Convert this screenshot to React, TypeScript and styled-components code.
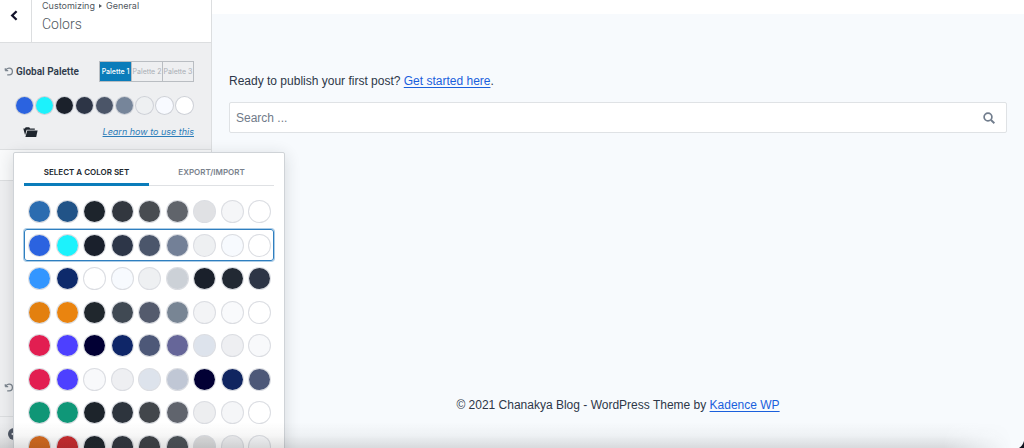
import React from "react";
import styled, { createGlobalStyle } from "styled-components";

const GlobalStyle = createGlobalStyle`
  * { box-sizing: border-box; }
  html, body { margin: 0; height: 100%; overflow: hidden; }
  body { font-family: Inter, "Liberation Sans", sans-serif; color: #2d3748; }
  button, input { font-family: inherit; }
  button { padding: 0; border: 0; background: none; cursor: pointer; }
  h1, h2, p { margin: 0; }
`;

const Page = styled.div`
  position: relative;
  display: grid;
  grid-template-columns: 212px minmax(0, 1fr);
  height: 100vh;
  overflow: hidden;
`;

const Sidebar = styled.aside`
  position: relative;
  z-index: 1;
  display: flex;
  flex-direction: column;
  min-height: 0;
  background: #eeeff1;
  border-right: 1px solid #dcdee0;
`;

const PanelHeader = styled.header`
  display: flex;
  flex: none;
  height: 43px;
  background: #fff;
  border-bottom: 1px solid #dcdee0;
`;

const BackButton = styled.button`
  display: flex;
  justify-content: center;
  align-items: flex-start;
  width: 32px;
  padding: 10px 3px 0 0;
  border-right: 1px solid #dcdee0;
  color: #14142b;
`;

const Heading = styled.div`
  padding-left: 10px;
`;

const Crumb = styled.p`
  display: flex;
  align-items: center;
  gap: 4px;
  font-size: 9px;
  line-height: 12px;
  color: #50575e;
`;

const CrumbMark = styled.span`
  border: 2px solid transparent;
  border-left: 3px solid #50575e;
  border-right: 0;
`;

const PanelTitle = styled.h1`
  font-family: Roboto, sans-serif;
  font-size: 14px;
  line-height: 24px;
  font-weight: 300;
  color: #50575e;
`;

const PaletteControl = styled.section`
  position: relative;
  flex: none;
  height: 106px;
  padding: 18px 17px 0 4px;
`;

const ControlBar = styled.div`
  display: flex;
  align-items: center;
  justify-content: space-between;
  height: 21px;
`;

const ControlTitle = styled.div`
  display: flex;
  align-items: center;
  gap: 2px;
`;

const ControlName = styled.h2`
  font-family: Roboto, sans-serif;
  font-size: 10px;
  line-height: 14px;
  font-weight: 600;
  color: #2f3a4a;
  white-space: nowrap;
`;

const ResetButton = styled.button`
  display: flex;
  color: #7b848e;
`;

const ButtonGroup = styled.div`
  display: grid;
  grid-template-columns: repeat(3, 1fr);
  width: 95px;
  height: 21px;
  border: 1px solid #b9bdc2;
`;

const PaletteButton = styled.button<{ $active?: boolean }>`
  font-size: 7px;
  line-height: 8px;
  font-weight: ${(p) => (p.$active ? 500 : 400)};
  white-space: nowrap;
  color: ${(p) => (p.$active ? "#fff" : "#a9aeb5")};
  background: ${(p) => (p.$active ? "#0a7cba" : "transparent")};
  & + & { border-left: 1px solid #b9bdc2; }
`;

const Swatches = styled.div`
  display: flex;
  justify-content: space-between;
  padding-left: 11px;
  margin-top: 14px;
`;

const Swatch = styled.span<{ $color: string; $size: number }>`
  display: block;
  flex: none;
  width: ${(p) => p.$size}px;
  height: ${(p) => p.$size}px;
  border-radius: 50%;
  border: 1px solid rgba(110, 120, 140, 0.25);
  background: ${(p) => p.$color};
  background-clip: padding-box;
`;

const SwatchButton = styled(Swatch).attrs({ as: "button" })``;

const ControlFooter = styled.div`
  display: flex;
  align-items: center;
  justify-content: space-between;
  height: 14px;
  margin-top: 10px;
  padding-left: 19px;
`;

const FolderButton = styled.button`
  display: flex;
  color: #1f262e;
`;

const HelpLink = styled.a`
  font-size: 9px;
  line-height: 14px;
  font-style: italic;
  color: #2b7cb8;
`;

const Gap = styled.div`
  flex: none;
  height: 32px;
  background: #f9fafb;
  border-top: 1px solid #dcdee0;
  border-bottom: 1px solid #dcdee0;
`;

const LowerControl = styled.section`
  display: flex;
  flex: 1;
  align-items: flex-end;
  padding: 0 0 24px 4px;
`;

const PanelFooter = styled.footer`
  flex: none;
  height: 32px;
  padding: 11px 0 0 8px;
  border-top: 1px solid #dcdee0;
`;

const CollapseButton = styled.button`
  display: flex;
  color: #505866;
`;

const Popover = styled.div`
  position: absolute;
  top: 109px;
  left: 13px;
  z-index: 2;
  width: 272px;
  padding: 7px 10px;
  background: #fff;
  border: 1px solid #cfd3d7;
  border-radius: 2px;
  box-shadow: 0 3px 16px rgba(30, 35, 45, 0.16);
`;

const Tabs = styled.div`
  display: grid;
  grid-template-columns: 1fr 1fr;
  height: 26px;
  box-shadow: inset 0 -1px #dfe1e4;
`;

const Tab = styled.button<{ $active?: boolean }>`
  padding-top: 1px;
  font-size: 8px;
  line-height: 12px;
  font-weight: 600;
  text-transform: uppercase;
  color: ${(p) => (p.$active ? "#20272f" : "#7a828d")};
  border-bottom: 3px solid ${(p) => (p.$active ? "#0a7cba" : "transparent")};
`;

const SetList = styled.div`
  display: grid;
  grid-template-rows: repeat(8, 1fr);
  height: 268px;
  margin-top: 9px;
`;

const ColorSet = styled.button<{ $active?: boolean }>`
  display: flex;
  align-items: center;
  align-self: center;
  justify-content: space-between;
  height: 32px;
  padding: 0 2px 0 3px;
  border: 1px solid ${(p) => (p.$active ? "#2f7fc0" : "transparent")};
  border-radius: 3px;
  box-shadow: ${(p) => (p.$active ? "0 0 0 1px rgba(47, 127, 192, 0.4)" : "none")};
`;

const Preview = styled.main`
  display: flex;
  flex-direction: column;
  min-width: 0;
  background: #f7fafd;
  border-top: 14px solid #fff;
  color: #2d3748;
  font-family: "Liberation Sans", Arial, sans-serif;
`;

const Content = styled.section`
  flex: 1;
  padding: 57px 17px 0;
`;

const Message = styled.p`
  font-size: 12px;
  line-height: 20px;
`;

const SiteLink = styled.a`
  color: #1a5fdc;
  text-underline-offset: 2px;
`;

const SearchForm = styled.form`
  display: flex;
  align-items: center;
  height: 31px;
  margin-top: 11px;
  padding-right: 11px;
  background: #fff;
  border: 1px solid #dfe2e5;
  border-radius: 2px;
`;

const SearchInput = styled.input`
  flex: 1;
  min-width: 0;
  padding: 0 6px;
  border: 0;
  outline: 0;
  background: transparent;
  font-size: 12px;
  line-height: 20px;
  &::placeholder { color: #717b89; opacity: 1; }
`;

const SearchButton = styled.button`
  display: flex;
  color: #717d8d;
`;

const SiteFooter = styled.footer`
  padding-bottom: 33px;
  font-size: 12px;
  line-height: 20px;
  text-align: center;
`;

const BottomShade = styled.div`
  position: absolute;
  inset: auto 0 0;
  z-index: 3;
  height: 26px;
  pointer-events: none;
  background: linear-gradient(to bottom, rgba(40, 40, 40, 0), rgba(40, 40, 40, 0.04) 50%, rgba(40, 40, 40, 0.15));
  mask-image: linear-gradient(to right, #000 calc(100% - 80px), transparent calc(100% - 12px));
`;

const WindowCorner = styled.svg`
  position: absolute;
  right: 0;
  bottom: 0;
  z-index: 4;
`;

const globalColors = ["#2b63e0", "#1cf2fc", "#1b212b", "#2d3546", "#4b5568", "#76859a", "#eef0f2", "#f8faff", "#ffffff"];

const colorSets = [
  ["#2b6cb0", "#215387", "#1d242c", "#32373f", "#484c51", "#60646b", "#e0e1e4", "#f5f6f8", "#ffffff"],
  ["#2b63e0", "#1cf2fc", "#1a202c", "#2d3648", "#4b566b", "#738097", "#eef0f2", "#f7fafe", "#ffffff"],
  ["#3396ff", "#0e2a6b", "#ffffff", "#f7fafe", "#eef0f2", "#ccd1d7", "#1a202b", "#222933", "#2d3546"],
  ["#e3800f", "#ea840f", "#20272d", "#404953", "#545b6d", "#788594", "#f3f4f6", "#f9fafc", "#ffffff"],
  ["#e21e51", "#4d40ff", "#020034", "#0f2668", "#4d5878", "#666699", "#dde3ec", "#eeeff2", "#f8f9fb"],
  ["#e21e51", "#4d40ff", "#f8f9fb", "#eeeff2", "#dde3ec", "#c0c7d5", "#020034", "#102560", "#4d5878"],
  ["#0f9676", "#0f9778", "#1d242b", "#2d343d", "#42464b", "#60646d", "#edeef0", "#f5f6f8", "#ffffff"],
  ["#d56a1e", "#c92a2e", "#1d242b", "#30363e", "#3d4146", "#4b5157", "#dddedf", "#eeeff1", "#f7f8fa"],
];

const ResetIcon = () => (
  <svg width="10" height="9" viewBox="0 0 10 9" fill="none" stroke="currentColor" strokeWidth="1.3" aria-hidden="true">
    <path d="M1.2 3.6h3M1.3 1.200v2.400M1.600 3.400C2.400 1.900 3.800 1.100 5.200 1.200c1.900.1 3.200 1.500 3.200 3.300S7 7.900 5.100 7.900H3.200" />
  </svg>
);

export default function App() {
  return (
    <Page>
      <GlobalStyle />
      <Sidebar>
        <PanelHeader>
          <BackButton aria-label="Back">
            <svg width="8" height="11" viewBox="0 0 8 11" fill="none" stroke="currentColor" strokeWidth="2.3" aria-hidden="true">
              <path d="M6.600 1.200 2.200 5.500l4.400 4.300" />
            </svg>
          </BackButton>
          <Heading>
            <Crumb>Customizing <CrumbMark /> General</Crumb>
            <PanelTitle>Colors</PanelTitle>
          </Heading>
        </PanelHeader>
        <PaletteControl>
          <ControlBar>
            <ControlTitle>
              <ResetButton aria-label="Reset palette"><ResetIcon /></ResetButton>
              <ControlName>Global Palette</ControlName>
            </ControlTitle>
            <ButtonGroup>
              <PaletteButton $active>Palette 1</PaletteButton>
              <PaletteButton>Palette 2</PaletteButton>
              <PaletteButton>Palette 3</PaletteButton>
            </ButtonGroup>
          </ControlBar>
          <Swatches>
            {globalColors.map((color, i) => (
              <SwatchButton key={i} $color={color} $size={19} aria-label={`Color ${i + 1}`} />
            ))}
          </Swatches>
          <ControlFooter>
            <FolderButton aria-label="Open color sets">
              <svg width="15" height="12" viewBox="0 0 15 12" fill="currentColor" aria-hidden="true">
                <path d="M.3 2.600h1.600l.8-1.400h3.500l.9 1.200h4.700v1.400H3.600L2.100 9.200z" />
                <path d="M4.300 4.400h10.300L13.200 11H2.400z" />
              </svg>
            </FolderButton>
            <HelpLink href="#help">Learn how to use this</HelpLink>
          </ControlFooter>
          <Popover>
            <Tabs role="tablist">
              <Tab role="tab" aria-selected="true" $active>Select a color set</Tab>
              <Tab role="tab" aria-selected="false">Export/Import</Tab>
            </Tabs>
            <SetList>
              {colorSets.map((set, i) => (
                <ColorSet key={i} $active={i === 1} aria-label={`Color set ${i + 1}`}>
                  {set.map((color, j) => (
                    <Swatch key={j} $color={color} $size={23} />
                  ))}
                </ColorSet>
              ))}
            </SetList>
          </Popover>
        </PaletteControl>
        <Gap />
        <LowerControl>
          <ResetButton aria-label="Reset colors"><ResetIcon /></ResetButton>
        </LowerControl>
        <PanelFooter>
          <CollapseButton aria-label="Hide controls">
            <svg width="12" height="12" viewBox="0 0 12 12" aria-hidden="true">
              <circle cx="6" cy="6" r="6" fill="currentColor" />
              <path d="M7.500 3v6L3 6z" fill="#eeeff1" />
            </svg>
          </CollapseButton>
        </PanelFooter>
      </Sidebar>
      <Preview>
        <Content>
          <Message>
            Ready to publish your first post? <SiteLink href="#new-post">Get started here</SiteLink>.
          </Message>
          <SearchForm role="search">
            <SearchInput type="search" placeholder="Search ..." aria-label="Search" />
            <SearchButton type="button" aria-label="Submit search">
              <svg width="12" height="12" viewBox="0 0 12 12" fill="none" stroke="currentColor" aria-hidden="true">
                <circle cx="5" cy="5" r="3.900" strokeWidth="1.7" />
                <path d="m8 8 3.400 3.200" strokeWidth="2" />
              </svg>
            </SearchButton>
          </SearchForm>
        </Content>
        <SiteFooter>
          © 2021 Chanakya Blog - WordPress Theme by <SiteLink href="#kadence">Kadence WP</SiteLink>
        </SiteFooter>
      </Preview>
      <BottomShade />
      <WindowCorner width="5" height="7" viewBox="0 0 5 7" aria-hidden="true">
        <path d="M5 0v7H0c2.500-1.500 4-3.500 5-7" fill="#11131f" />
      </WindowCorner>
    </Page>
  );
}
